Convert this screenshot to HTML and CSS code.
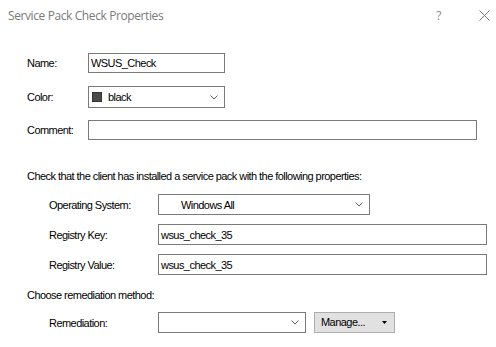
FILE: index.html
```html
<!DOCTYPE html>
<html lang="en">
  <head>
    <meta charset="UTF-8" />
    <meta name="viewport" content="width=device-width, initial-scale=1.0" />
    <title>Service Pack Check Properties</title>
    <link rel="stylesheet" href="styles.css">
  </head>
  <body>
    <div id="dialog">
      <div class="titlebar">
        <span class="title">Service Pack Check Properties</span>
        <div class="title-buttons">
          <span class="help">?</span>
          <svg class="close" width="11" height="11" viewBox="0 0 11 11">
            <path d="M0.5 0.5 L10.5 10.5 M10.5 0.5 L0.5 10.5" stroke="#7a7a7a" stroke-width="1" fill="none" />
          </svg>
        </div>
      </div>

      <div id="content">
        <div class="general">
          <div class="row h20">
            <span class="label label-short">Name:</span>
            <div class="field w-name">WSUS_Check</div>
          </div>
          <div class="row h22 gap13">
            <span class="label label-short">Color:</span>
            <div class="field select w-name">
              <span class="swatch"></span>
              <span class="value">black</span>
              <svg class="chevron" width="8" height="5" viewBox="0 0 8 5"><polyline points="0.5,0.5 4,4 7.5,0.5" stroke="#606060" fill="none" /></svg>
            </div>
          </div>
          <div class="row h20 gap12">
            <span class="label label-short">Comment:</span>
            <div class="field w-comment"></div>
          </div>
        </div>

        <p class="section">Check that the client has installed a service pack with the following properties:</p>

        <div class="sub">
          <div class="row h21 first">
            <span class="label label-long">Operating System:</span>
            <div class="field select w-os">
              <span class="value os-value">Windows All</span>
              <svg class="chevron" width="8" height="5" viewBox="0 0 8 5"><polyline points="0.5,0.5 4,4 7.5,0.5" stroke="#606060" fill="none" /></svg>
            </div>
          </div>
          <div class="row h21 gap9">
            <span class="label label-long">Registry Key:</span>
            <div class="field w-reg">wsus_check_35</div>
          </div>
          <div class="row h21 gap9">
            <span class="label label-long">Registry Value:</span>
            <div class="field w-reg">wsus_check_35</div>
          </div>
        </div>

        <p class="section section-2">Choose remediation method:</p>

        <div class="sub">
          <div class="row h21 first-2">
            <span class="label label-long">Remediation:</span>
            <div class="field select w-rem">
              <span class="value"></span>
              <svg class="chevron" width="8" height="5" viewBox="0 0 8 5"><polyline points="0.5,0.5 4,4 7.5,0.5" stroke="#606060" fill="none" /></svg>
            </div>
            <div class="button">
              <span>Manage...</span>
              <svg width="5" height="3" viewBox="0 0 5 3"><polygon points="0,0 5,0 2.5,3" fill="#000" /></svg>
            </div>
          </div>
        </div>
      </div>
    </div>
  </body>
</html>
```

FILE: styles.css
```css
html,
body {
  margin: 0;
  padding: 0;
}
body {
  width: 496px;
  height: 347px;
  background: #fff;
  color: #000;
  font: normal 11px/14px "Liberation Sans", Arial, sans-serif;
  letter-spacing: -0.55px;
  overflow: hidden;
}

/* Title bar */
.titlebar {
  height: 30px;
  display: flex;
  align-items: center;
  justify-content: space-between;
  padding: 0 6px 0 8px;
}
.title {
  font: normal 12px "Open Sans", "Noto Sans", sans-serif;
  letter-spacing: -0.4px;
  color: #7a7a7a;
}
.title-buttons {
  display: flex;
  align-items: center;
  gap: 38px;
}
.help {
  font: normal 12px "Open Sans", sans-serif;
  color: #8a8a8a;
}

/* Content */
#content {
  padding-left: 27px;
}
.general {
  padding-top: 23px;
}
.row {
  display: flex;
  align-items: center;
}
.h20 { height: 20px; }
.h21 { height: 21px; }
.h22 { height: 22px; }
.gap9 { margin-top: 9px; }
.gap12 { margin-top: 12px; }
.gap13 { margin-top: 13px; }

.label-short {
  width: 61px;
}
.label-long {
  width: 109px;
}

.field {
  box-sizing: border-box;
  height: 100%;
  border: 1px solid #7a7a7a;
  background: #fff;
  display: flex;
  align-items: center;
  padding: 0 2px;
}
.select {
  padding: 0 6px 0 3px;
}
.select .value {
  flex: 1;
}
.w-name { width: 137px; }
.w-comment { width: 389px; }
.w-os { width: 212px; }
.w-reg { width: 329px; }
.w-rem { width: 148px; }

.swatch {
  width: 8px;
  height: 8px;
  background: #4a4a4a;
  border: 1px solid #333;
  margin-right: 6px;
}
.os-value {
  padding-left: 19px;
}

.section {
  margin: 29px 0 0;
}
.section-2 {
  margin-top: 13px;
}
.sub {
  padding-left: 22px;
}
.first { margin-top: 11px; }
.first-2 { margin-top: 10px; }

.button {
  box-sizing: border-box;
  width: 81px;
  height: 21px;
  margin-left: 8px;
  align-self: flex-start;
  background: #e1e1e1;
  border: 1px solid #adadad;
  display: flex;
  align-items: center;
  justify-content: space-between;
  padding: 0 7px 1px 6px;
}
```
